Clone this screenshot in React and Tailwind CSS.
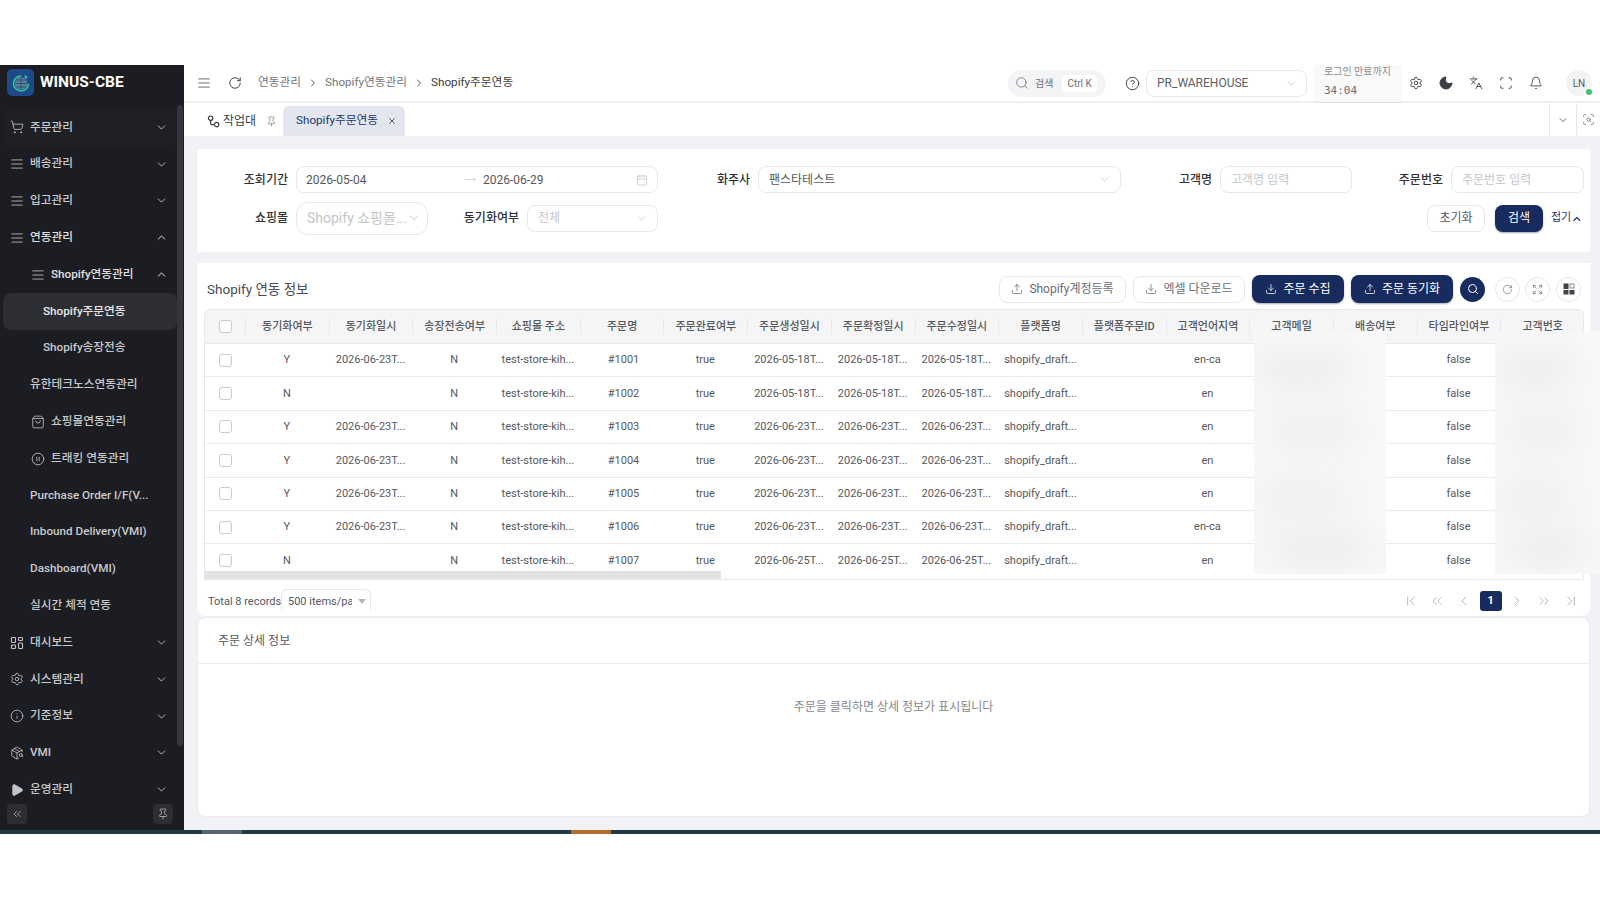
import React from 'react';
import {
  ShoppingCart, AlignJustify, ChevronDown, ChevronUp, ShoppingBag, CirclePause, Settings, Info, PackageSearch,
  Play, ChevronsLeft, Pin, Search, CircleHelp, Moon, Languages, Scan, Bell, RotateCw, X, ScanSearch,
  Calendar, MoveRight, Upload, Download, Expand, ChevronRight, ChevronLeft, ChevronsRight, ChevronFirst, ChevronLast,
} from 'lucide-react';

function DashIcon({ size = 14, className }) {
  return (
    <svg width={size} height={size} viewBox="0 0 14 14" fill="none" stroke="currentColor" strokeWidth="1.1" className={className}>
      <rect x="1.5" y="1.5" width="4" height="5" rx="0.8" />
      <rect x="8.5" y="1.5" width="4" height="3" rx="0.8" />
      <rect x="1.5" y="9" width="4" height="3.5" rx="0.8" />
      <rect x="8.5" y="7" width="4" height="5.5" rx="0.8" />
    </svg>
  );
}

function PlayIcon({ className }) {
  return <Play size={14} fill="currentColor" className={className} />;
}

function GridIcon() {
  return (
    <svg width="12" height="12" viewBox="0 0 12 12" fill="#3f4248">
      <rect x="0.5" y="0.5" width="5" height="5.5" />
      <rect x="7" y="1" width="4" height="4" fill="none" stroke="#8a8d92" />
      <rect x="0.5" y="7" width="5" height="4.5" />
      <rect x="6.5" y="7" width="5" height="4.5" />
    </svg>
  );
}

function WorkbenchIcon() {
  return (
    <svg width="13" height="13" viewBox="0 0 13 13" fill="none" stroke="#3a3d43" strokeWidth="1.2">
      <circle cx="3.6" cy="3.2" r="2.2" />
      <circle cx="9.6" cy="9.6" r="2.2" />
      <path d="M3.6 5.4v3.2c0 .6.4 1 1 1h2.8" />
    </svg>
  );
}

const sideItems = [
  { label: '주문관리', icon: ShoppingCart, arrow: 'down', hover: true },
  { label: '배송관리', icon: AlignJustify, arrow: 'down' },
  { label: '입고관리', icon: AlignJustify, arrow: 'down' },
  { label: '연동관리', icon: AlignJustify, arrow: 'up', bright: true },
  { label: 'Shopify연동관리', icon: AlignJustify, arrow: 'up', indent: 'pl-[28px]', bright: true },
  { label: 'Shopify주문연동', indent: 'pl-[40px]', active: true },
  { label: 'Shopify송장전송', indent: 'pl-[40px]' },
  { label: '유한테크노스연동관리', indent: 'pl-[27px]' },
  { label: '쇼핑몰연동관리', icon: ShoppingBag, indent: 'pl-[28px]' },
  { label: '트래킹 연동관리', icon: CirclePause, indent: 'pl-[28px]' },
  { label: 'Purchase Order I/F(V...', indent: 'pl-[27px]' },
  { label: 'Inbound Delivery(VMI)', indent: 'pl-[27px]' },
  { label: 'Dashboard(VMI)', indent: 'pl-[27px]' },
  { label: '실시간 체적 연동', indent: 'pl-[27px]' },
  { label: '대시보드', icon: DashIcon, arrow: 'down' },
  { label: '시스템관리', icon: Settings, arrow: 'down' },
  { label: '기준정보', icon: Info, arrow: 'down' },
  { label: 'VMI', icon: PackageSearch, arrow: 'down' },
  { label: '운영관리', icon: PlayIcon, arrow: 'down' },
];

const headers = ['동기화여부', '동기화일시', '송장전송여부', '쇼핑몰 주소', '주문명', '주문완료여부', '주문생성일시', '주문확정일시', '주문수정일시', '플랫폼명', '플랫폼주문ID', '고객언어지역', '고객메일', '배송여부', '타임라인여부', '고객번호'];

const D = '2026-06-23T...';
const M = '2026-05-18T...';
const L = '2026-06-25T...';
const rows = [
  ['Y', D, 'N', '#1001', M, M, M, 'en-ca'],
  ['N', '', 'N', '#1002', M, M, M, 'en'],
  ['Y', D, 'N', '#1003', D, D, D, 'en'],
  ['Y', D, 'N', '#1004', D, D, D, 'en'],
  ['Y', D, 'N', '#1005', D, D, D, 'en'],
  ['Y', D, 'N', '#1006', D, D, D, 'en-ca'],
  ['N', '', 'N', '#1007', L, L, L, 'en'],
];

const Check = () => <span className="block h-[13px] w-[13px] rounded-[3px] border border-[#c9cbd0] bg-white" />;

const Cell = ({ children, left }) => (
  <div className={`w-[83.7px] shrink-0 whitespace-nowrap pt-[1px] ${left ? 'pl-[6px] text-left' : 'px-[4px] text-center'}`}>{children}</div>
);

const Field = ({ children, className = '' }) => (
  <div className={`flex items-center rounded-lg border border-[#e6e8ec] bg-white text-[12px] ${className}`}>{children}</div>
);

const Label = ({ children, className = '' }) => (
  <span className={`text-right text-[12px] font-medium text-[#2f3136] ${className}`}>{children}</span>
);

const PageCell = ({ children }) => <div className="flex w-[26.7px] shrink-0 justify-center">{children}</div>;

// blurred-out customer columns lying over the table
const BlurPatch = ({ className }) => (
  <div className={`absolute top-[331px] h-[243px] overflow-hidden bg-[#f8f8f9] ${className}`}>
    <div className="absolute left-[5%] top-[18px] h-[40px] w-[65%] bg-[#eeeeef] blur-[14px]" />
    <div className="absolute left-[15%] top-[82px] h-[36px] w-[60%] bg-[#efeff0] blur-[14px]" />
    <div className="absolute left-[5%] top-[146px] h-[40px] w-[65%] bg-[#f0f0f1] blur-[14px]" />
    <div className="absolute left-[15%] top-[200px] h-[36px] w-[70%] bg-[#eeeeef] blur-[14px]" />
  </div>
);

export default function App() {
  return (
    <div className='relative h-[900px] w-[1600px] overflow-hidden bg-white pt-[65px] font-["Roboto","Noto_Sans_CJK_KR",sans-serif]'>
      <div className="flex h-[765px]">
        {/* Sidebar */}
        <aside className="relative flex w-[184px] shrink-0 flex-col bg-[#1c1d22] text-[#c9cacd]">
          <div className="flex h-[44px] shrink-0 items-center gap-[6px] pb-[9px] pl-[7px]">
            <div className="flex h-[27px] w-[27px] items-center justify-center rounded-[5px] bg-[#1f4a8a]">
              <svg width="20" height="20" viewBox="0 0 20 20" fill="none">
                <circle cx="10" cy="10.5" r="6.2" fill="#5f7f9c" />
                <path d="M3.8 10.5h12.4M10 4.3v12.4M5 7h10M5 14h10" stroke="#24466e" strokeWidth="0.8" />
                <path d="M10 3a7.5 7.5 0 1 0 7.5 7.5" stroke="#2bd08f" strokeWidth="1.5" />
                <path d="M13.5 2l3.5 1.8-3 2.4z" fill="#2bd08f" />
              </svg>
            </div>
            <span className="text-[15.5px] font-bold text-white">WINUS-CBE</span>
          </div>
          <nav className="flex flex-col">
            {sideItems.map((item) => {
              const Icon = item.icon;
              return (
                <div
                  key={item.label}
                  className={`ml-[3px] mr-[7px] flex h-[36.8px] shrink-0 items-center rounded-lg pr-[9px] text-[11.7px] font-medium ${item.indent || 'pl-[7px]'} ${item.active ? 'bg-[#2d2e33] text-[#e8e8ea]' : ''} ${item.hover ? 'bg-[#1f2024]' : ''} ${item.bright ? 'text-[#e0e0e2]' : ''}`}
                >
                  {Icon && <Icon size={14} strokeWidth={1.4} className="mr-[6px] shrink-0 text-[#c4c5c8]" />}
                  <span className="truncate">{item.label}</span>
                  {item.arrow === 'down' && <ChevronDown size={13} strokeWidth={1.6} className="ml-auto shrink-0" />}
                  {item.arrow === 'up' && <ChevronUp size={13} strokeWidth={1.8} className="ml-auto shrink-0" />}
                </div>
              );
            })}
          </nav>
          {/* scrollbar */}
          <div className="absolute right-[1px] top-[40px] h-[641px] w-[6px] rounded-full bg-[#35363b]" />
          {/* footer buttons */}
          <div className="absolute inset-x-0 bottom-[6px] flex items-center justify-between bg-[#1c1d22] pl-[7px] pr-[11px]">
            <div className="flex h-[20px] w-[20px] items-center justify-center rounded bg-[#2d2e33]">
              <ChevronsLeft size={12} strokeWidth={1.4} />
            </div>
            <div className="flex h-[20px] w-[20px] items-center justify-center rounded bg-[#2d2e33]">
              <Pin size={12} strokeWidth={1.4} />
            </div>
          </div>
        </aside>

        <div className="flex min-w-0 flex-1 flex-col">
          {/* Header */}
          <header className="flex h-[38px] shrink-0 items-center border-b-2 border-[#eef0f3] bg-white pr-[8px] text-[#55585e]">
            <AlignJustify size={14} strokeWidth={1.5} className="ml-[13px]" />
            <RotateCw size={14} strokeWidth={1.6} className="ml-[17px] text-[#3a3d43]" />
            <div className="ml-[16px] flex items-center text-[11.7px]">
              <span className="text-[#73767c]">연동관리</span>
              <ChevronRight size={12} className="mx-[6px]" />
              <span className="text-[#73767c]">Shopify연동관리</span>
              <ChevronRight size={12} className="mx-[6px]" />
              <span className="text-[#3a3d43]">Shopify주문연동</span>
            </div>
            <div className="ml-auto flex h-[27px] w-[98px] items-center rounded-full bg-[#f3f4f6] pl-[7px] text-[10px] text-[#6e7177]">
              <Search size={14} strokeWidth={1.4} />
              <span className="ml-[6px]">검색</span>
              <span className="ml-[9px] rounded-[4px] bg-white px-[5px] py-[1px] text-[10px]">Ctrl K</span>
            </div>
            <CircleHelp size={15} strokeWidth={1.5} className="ml-[19px] text-[#3a3d43]" />
            <div className="ml-[6px] flex h-[27px] w-[161px] items-center rounded-lg border border-[#e6e8ec] pl-[10px] pr-[8px] text-[12px] text-[#5d6066]">
              PR_WAREHOUSE
              <ChevronDown size={13} strokeWidth={1.2} className="ml-auto text-[#b5b7bb]" />
            </div>
            <div className="ml-[7px] flex h-[37px] w-[88px] flex-col self-start rounded-b-sm bg-[#f9f9f9] pl-[10px] shadow-[0_1px_1px_rgba(0,0,0,0.08)]">
              <span className="text-[10px] leading-[14px] text-[#8c8f94]">로그인 만료까지</span>
              <span className='mt-[5px] font-["DejaVu_Sans_Mono",monospace] text-[11px] leading-[14px] text-[#6a6d72]'>34:04</span>
            </div>
            <Settings size={14} strokeWidth={1.6} className="ml-[7px] text-[#3a3d43]" />
            <Moon size={16} fill="#3a3d43" strokeWidth={1.5} className="ml-[15px] text-[#3a3d43]" />
            <Languages size={14} strokeWidth={1.5} className="ml-[15px] text-[#3a3d43]" />
            <Scan size={14} strokeWidth={1.5} className="ml-[16px] text-[#3a3d43]" />
            <Bell size={14} strokeWidth={1.5} className="ml-[16px] text-[#3a3d43]" />
            <div className="relative ml-[23px] flex h-[26px] w-[26px] items-center justify-center rounded-full bg-[#f3f3f4] text-[10px] text-[#55585e]">
              LN
              <span className="absolute bottom-[1px] right-0 h-[6px] w-[6px] rounded-full bg-[#3ec46d]" />
            </div>
          </header>

          {/* Tabs */}
          <div className="flex h-[33px] shrink-0 items-end bg-white text-[12px]">
            <div className="flex h-[30px] w-[99px] items-center pl-[23px] text-[#3a3d43]">
              <WorkbenchIcon />
              <span className="ml-[3px]">작업대</span>
              <Pin size={11} strokeWidth={1.4} className="ml-[10px] text-[#6e7177]" />
            </div>
            <div className="flex h-[30px] w-[122px] items-center rounded-t-md bg-[#e3e6ee] pl-[13px] text-[11.7px] text-[#20386e]">
              Shopify주문연동
              <X size={10} strokeWidth={2} className="ml-auto mr-[8px] text-[#3a3d43]" />
            </div>
            <div className="ml-auto flex h-full w-[27px] items-center justify-center border-l border-[#e6e8ec]">
              <ChevronDown size={12} className="text-[#6e7177]" />
            </div>
            <div className="flex h-full w-[24px] items-center justify-center border-l border-[#e6e8ec]">
              <ScanSearch size={13} strokeWidth={1.4} className="text-[#6e7177]" />
            </div>
          </div>

          {/* Content */}
          <main className="flex min-h-0 flex-1 flex-col bg-[#f0f2f6] pl-[13px] pr-[10px] pt-[13px] text-[#3f4248]">
            {/* Filter */}
            <section className="h-[103px] shrink-0 rounded-t-sm bg-white pl-[8px] pt-[17px]">
              <div className="flex h-[27px] items-center">
                <Label className="w-[83px]">조회기간</Label>
                <Field className="ml-[8px] h-[27px] w-[362px] pl-[9px] pr-[9px] text-[#55585e]">
                  <span className="w-[159px]">2026-05-04</span>
                  <MoveRight size={11} strokeWidth={1.2} className="text-[#b5b7bb]" />
                  <span className="ml-[7px]">2026-06-29</span>
                  <Calendar size={12} strokeWidth={1.2} className="ml-auto text-[#b5b7bb]" />
                </Field>
                <Label className="w-[92px]">화주사</Label>
                <Field className="ml-[8px] h-[27px] w-[363px] pl-[10px] pr-[9px] text-[#55585e]">
                  팬스타테스트
                  <ChevronDown size={13} strokeWidth={1.2} className="ml-auto text-[#b5b7bb]" />
                </Field>
                <Label className="w-[91px]">고객명</Label>
                <Field className="ml-[8px] h-[27px] w-[132px] pl-[10px] text-[#c4c6ca]">고객명 입력</Field>
                <Label className="w-[91px]">주문번호</Label>
                <Field className="ml-[8px] h-[27px] w-[133px] pl-[10px] text-[#c4c6ca]">주문번호 입력</Field>
              </div>
              <div className="mt-[9px] flex h-[32px] items-center">
                <Label className="w-[83px]">쇼핑몰</Label>
                <Field className="ml-[8px] h-[33px] w-[132px] rounded-xl pl-[10px] pr-[8px] text-[14px] text-[#c4c6ca]">
                  <span className="whitespace-nowrap">Shopify 쇼핑몰...</span>
                  <ChevronDown size={14} strokeWidth={1.2} className="ml-auto shrink-0 text-[#b5b7bb]" />
                </Field>
                <Label className="w-[91px]">동기화여부</Label>
                <Field className="ml-[8px] h-[27px] w-[131px] pl-[10px] pr-[9px] text-[11px] text-[#c4c6ca]">
                  전체
                  <ChevronDown size={13} strokeWidth={1.2} className="ml-auto text-[#b5b7bb]" />
                </Field>
                <button className="ml-auto h-[27px] w-[58px] rounded-lg border border-[#e6e8ec] bg-white text-[12px] text-[#55585e]">초기화</button>
                <button className="ml-[10px] h-[27px] w-[48px] rounded-lg bg-[#172b5e] text-[12px] text-white shadow-[0_1px_2px_rgba(0,0,0,0.35)]">검색</button>
                <span className="ml-[8px] mr-[7px] flex w-[32px] items-center whitespace-nowrap pt-[1px] text-[11px] text-[#20386e]">
                  접기
                  <ChevronUp size={12} strokeWidth={2.4} />
                </span>
              </div>
            </section>

            {/* Table card */}
            <section className="mt-[11px] h-[353px] shrink-0 rounded-b-lg bg-white pl-[7px] pr-[6px]">
              <div className="flex h-[46px] items-center pt-[6px]">
                <span className="ml-[3px] text-[13.5px] text-[#4a4d53]">Shopify 연동 정보</span>
                <div className="ml-auto mr-[3px] flex items-center text-[12px]">
                  <button className="flex h-[27px] w-[127px] items-center justify-center gap-[6px] rounded-lg border border-[#e6e8ec] text-[#6a6d72]">
                    <Upload size={12} strokeWidth={1.5} />Shopify계정등록
                  </button>
                  <button className="ml-[7px] flex h-[27px] w-[112px] items-center justify-center gap-[6px] rounded-lg border border-[#e6e8ec] text-[#6a6d72]">
                    <Download size={12} strokeWidth={1.5} />엑셀 다운로드
                  </button>
                  <button className="ml-[7px] flex h-[28px] w-[92px] items-center justify-center gap-[6px] rounded-lg bg-[#172b5e] text-white shadow-[0_1px_2px_rgba(0,0,0,0.35)]">
                    <Download size={12} strokeWidth={1.5} />주문 수집
                  </button>
                  <button className="ml-[7px] flex h-[28px] w-[102px] items-center justify-center gap-[6px] rounded-lg bg-[#172b5e] text-white shadow-[0_1px_2px_rgba(0,0,0,0.35)]">
                    <Upload size={12} strokeWidth={1.5} />주문 동기화
                  </button>
                  <span className="ml-[7px] flex h-[25px] w-[25px] items-center justify-center rounded-full bg-[#172b5e] text-white">
                    <Search size={12} strokeWidth={2} />
                  </span>
                  <span className="ml-[10px] flex h-[25px] w-[25px] items-center justify-center rounded-full border border-[#e6e8ec] text-[#6a6d72]">
                    <RotateCw size={11} strokeWidth={1.4} />
                  </span>
                  <span className="ml-[5px] flex h-[25px] w-[25px] items-center justify-center rounded-full border border-[#e6e8ec] text-[#6a6d72]">
                    <Expand size={11} strokeWidth={1.5} />
                  </span>
                  <span className="ml-[6px] flex h-[25px] w-[25px] items-center justify-center rounded-full border border-[#e6e8ec]">
                    <GridIcon />
                  </span>
                </div>
              </div>

              <div className="h-[271px] overflow-hidden rounded-t-md border border-[#e6e8ec] text-[11px]">
                <div className="flex h-[34px] items-center border-b border-[#e6e8ec] bg-[#f5f5f6] font-medium text-[#55585e]">
                  <div className="flex w-[40px] shrink-0 justify-center"><Check /></div>
                  {headers.map((h) => (
                    <div key={h} className="w-[83.7px] shrink-0 border-l border-[#e6e8ec] text-center leading-[17px]">{h}</div>
                  ))}
                </div>
                <div className="h-[227px] overflow-hidden">
                  {rows.map((r) => (
                    <div key={r[3]} className="flex h-[33.4px] items-center border-b border-[#e9eaed] text-[#55585e]">
                      <div className="flex w-[40px] shrink-0 justify-center"><Check /></div>
                      <Cell>{r[0]}</Cell>
                      <Cell>{r[1]}</Cell>
                      <Cell>{r[2]}</Cell>
                      <Cell>test-store-kih...</Cell>
                      <Cell left><span className="pl-[22px]">{r[3]}</span></Cell>
                      <Cell>true</Cell>
                      <Cell>{r[4]}</Cell>
                      <Cell>{r[5]}</Cell>
                      <Cell>{r[6]}</Cell>
                      <Cell left>shopify_draft...</Cell>
                      <Cell />
                      <Cell>{r[7]}</Cell>
                      <Cell />
                      <Cell />
                      <Cell>false</Cell>
                      <Cell />
                    </div>
                  ))}
                </div>
                <div className="h-[9px] bg-white">
                  <div className="h-full w-[516px] bg-[#e2e2e4]" />
                </div>
              </div>

              <div className="flex h-[36px] items-start pt-[9px] text-[11px]">
                <span className="ml-[4px] mt-[5px] w-[65px] whitespace-nowrap text-[#55585e]">Total 8 records</span>
                <div className="ml-[8px] flex h-[21px] w-[90px] items-start rounded-t-md border border-b-0 border-[#e6e8ec] pl-[6px] pr-[4px] pt-[4px] text-[#55585e]">
                  <span className="w-[64px] overflow-hidden whitespace-nowrap">500 items/page</span>
                  <span className="ml-[6px] mt-[5px] h-0 w-0 border-x-[4px] border-t-[5px] border-x-transparent border-t-[#b5b7bb]" />
                </div>
                <div className="ml-auto mt-[2px] flex items-center text-[#a9abb0]">
                  <PageCell><ChevronFirst size={16} strokeWidth={1.3} /></PageCell>
                  <PageCell><ChevronsLeft size={16} strokeWidth={1.3} /></PageCell>
                  <PageCell><ChevronLeft size={16} strokeWidth={1.3} /></PageCell>
                  <PageCell>
                    <span className="flex h-[20px] w-[22px] items-center justify-center rounded-[3px] bg-[#172b5e] text-[11px] font-bold text-white">1</span>
                  </PageCell>
                  <PageCell><ChevronRight size={16} strokeWidth={1.3} /></PageCell>
                  <PageCell><ChevronsRight size={16} strokeWidth={1.3} /></PageCell>
                  <PageCell><ChevronLast size={16} strokeWidth={1.3} /></PageCell>
                </div>
              </div>
            </section>

            {/* Detail */}
            <section className="mt-[1px] h-[200px] shrink-0 rounded-lg border border-[#e9eaed] bg-white">
              <div className="flex h-[46px] items-center border-b border-[#e9eaed] pl-[20px] text-[12px] text-[#55585e]">주문 상세 정보</div>
              <div className="pt-[34px] text-center text-[12px] text-[#85888d]">주문을 클릭하면 상세 정보가 표시됩니다</div>
            </section>
          </main>
        </div>
      </div>

      {/* bottom strip */}
      <div className="flex h-[4px] bg-[#1f3a44]">
        <div className="ml-[202px] w-[40px] bg-[#56666e]" />
        <div className="ml-[329px] w-[40px] bg-[#b86b2a]" />
      </div>

      <BlurPatch className="left-[1254px] w-[132px]" />
      <BlurPatch className="left-[1495px] w-[105px]" />
    </div>
  );
}
